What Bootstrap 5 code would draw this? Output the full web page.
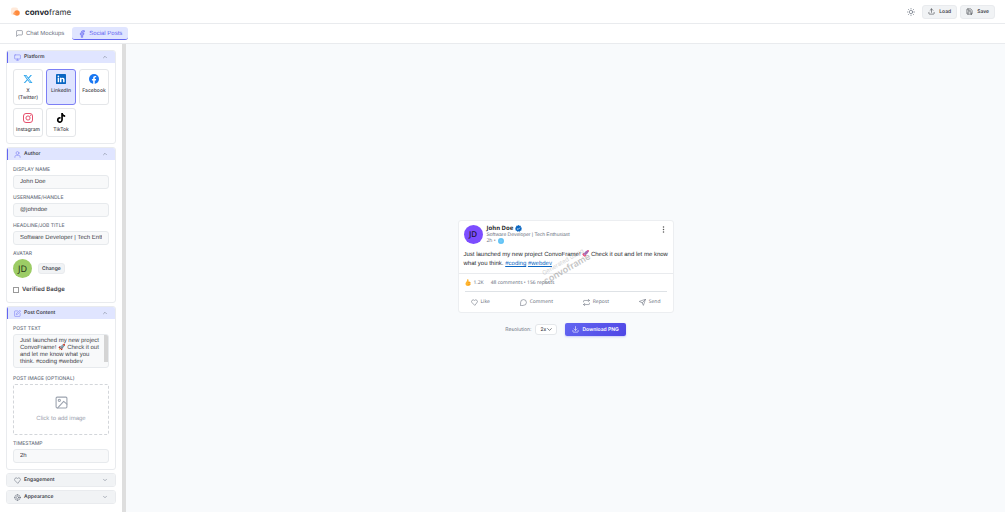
<!DOCTYPE html>
<html lang="en">
<head>
<meta charset="utf-8">
<meta name="viewport" content="width=device-width, initial-scale=1">
<title>convoframe</title>
<link href="https://cdn.jsdelivr.net/npm/bootstrap@5.3.0/dist/css/bootstrap.min.css" rel="stylesheet">
<style>
:root{--line:#e9ebee;--ink:#3f4349;--soft:#6b7280;--brand:#6366f1;--tint:#e0e5ff;--fill:#f1f3f5}
*{text-rendering:geometricPrecision}
body{font-family:Inter,"Liberation Sans",sans-serif;font-size:6px;line-height:8px;color:var(--ink);background:#fff}
svg{display:block;flex:none}
.ln{fill:none;stroke:currentColor;stroke-width:2;stroke-linecap:round;stroke-linejoin:round}
.topbar{height:24px;padding:0 10px 0 11px;border-bottom:1px solid var(--line)}
.brand{font-size:8px;line-height:12px;color:#25282d;text-decoration:none;gap:5px}
.tools{gap:3px}
.tool{height:14px;font-size:5px;line-height:8px;font-weight:600;color:var(--ink);background:var(--fill);border:1px solid #e9ebee;border-radius:3px;padding:0 5px;gap:4px}
.tabs{height:20px;padding:3px 10px;gap:2px;border-bottom:1px solid var(--line)}
.tab{height:13px;border:0;border-bottom:1px solid transparent;border-radius:3px;padding:1px 6px 0;gap:3px;font-family:"Liberation Sans",sans-serif;font-size:6px;line-height:8px;color:var(--soft);background:none}
.tab.active{color:var(--brand);background:var(--tint);border-color:var(--brand)}
.side{width:126px;flex:none;border-right:4px solid #dedede;padding:6px 6px 8px;gap:3px}
.panel{border:1px solid var(--line);border-radius:3px;overflow:hidden;background:#fff}
.head{width:100%;height:12px;border:0;padding:0 7px;gap:3px;font-size:5px;line-height:8px;font-weight:600;color:var(--ink);background:var(--fill);text-align:left}
.head svg{color:var(--soft)}
.head.open{background:var(--tint);border-left:1px solid var(--brand);padding-left:6px}
.head.open .lead-icon{color:#7c7ff5}
.inner{padding:6px}
.lbl{display:block;font-size:5px;line-height:8px;font-weight:500;color:var(--soft);margin-bottom:1px;text-transform:uppercase}
.field{margin-bottom:5px}
.box.form-control{height:14px;min-height:0;padding:0 6px;font-family:"Liberation Sans",sans-serif;font-size:6px;line-height:7px;border:1px solid #e7eaed;border-radius:3px;background:#f8f9fa;color:var(--ink)}
textarea.box.form-control{height:34px;padding:3px 8px 0 6px;overflow:hidden;resize:none;display:block;margin-bottom:7px;background:linear-gradient(#d4d4d4,#d4d4d4) right top/4px 27px no-repeat #f8f9fa}
.plats{display:grid;grid-template-columns:repeat(3,1fr);gap:3px}
.plat{border:1px solid #e4e6e9;border-radius:3px;background:#fff;padding:4px 0 2px;gap:4px;font-size:5px;line-height:7px;font-weight:500;color:var(--ink)}
.plat.active{border-color:#7c7ff5;background:var(--tint)}
.round{width:19px;height:19px;border-radius:50%;font-family:"Noto Sans",sans-serif;font-size:9px;line-height:19px;text-align:center;color:#26351a;background:#9ccc65;flex:none}
.pic{gap:6px;margin-bottom:8px}
.mini{height:11px;font-size:5px;line-height:8px;font-weight:600;background:var(--fill);border:1px solid #e9ebee;border-radius:3px;padding:0 3px;color:var(--ink)}
.verify{gap:3px;padding-bottom:2px}
.tick.form-check-input{width:6px;height:6px;margin:0;border-radius:0;border:1px solid #999;float:none}
.drop{height:51px;width:100%;border:1px dashed #d3d6da;border-radius:2px;background:#fff;color:#9ca3af;font-family:"Liberation Sans",sans-serif;font-size:6px;line-height:8px;gap:6px}
.stage{background:#f8fafc;gap:10px;padding:10px}
.post{width:100%;max-width:216px;background:#fff;border:1px solid #eceef1;border-radius:3px;font-family:"Noto Sans",sans-serif;color:#292b2e;position:relative}
.who{padding:4px 6px 0 5px;gap:4px}
.post .round{color:#1c1433;background:#7c4dff;font-weight:500;font-size:8px}
.meta{font-size:5px;line-height:6px;color:var(--soft)}
.role{font-family:"Liberation Sans",sans-serif}
.stats{height:18px;gap:3px}
.name{font-size:6px;line-height:7px;font-weight:700}
.copy{font-family:"Liberation Sans",sans-serif;font-size:6px;line-height:9px;padding:6px 2px 4px 5px;margin:0;border-bottom:1px solid var(--line)}
.copy svg{display:inline-block;vertical-align:-1px}
.copy a{color:#0a66c2}
.act{border:0;background:none;padding:0 6px;font-size:5px;line-height:8px;color:var(--soft);gap:3px}
.stamp{position:absolute;left:50%;top:50%;transform:translate(-50%,-50%) rotate(-30deg);font-family:Inter,sans-serif;color:#888;opacity:.5;font-weight:600;font-size:9px;line-height:10px;white-space:nowrap;pointer-events:none;text-align:center}
.stamp span{display:block;font-size:6px;line-height:6px;font-weight:400;opacity:.7}
.caption{font-size:5px;color:var(--soft)}
.res.form-select{width:22px;height:11px;font-size:5px;line-height:8px;padding:0 4px;border:1px solid #e4e7ea;border-radius:3px;color:var(--ink);background-size:5px;background-position:right 4px center;font-weight:500}
.dl{height:13px;font-size:5px;line-height:8px;font-weight:600;color:#fff;border:0;border-radius:2px;padding:0 7px;gap:3px;background:linear-gradient(135deg,#6366f1,#4f46e5);box-shadow:0 1px 2px #6366f14d}
</style>
</head>
<body class="d-flex flex-column min-vh-100">
<svg width="0" height="0" class="position-absolute" aria-hidden="true">
<defs>
<g id="up"><path d="m18 15-6-6-6 6"/></g>
<g id="down"><path d="m6 9 6 6 6-6"/></g>
<g id="heart"><path d="M12 21 3.500 12.500a5.500 5.500 0 0 1 8-7.800l.5.600.5-.6a5.500 5.500 0 0 1 8 7.800z"/></g>
<g id="tray"><path d="M3 15v4a2 2 0 0 0 2 2h14a2 2 0 0 0 2-2v-4"/></g>
</defs>
</svg>
<header class="topbar d-flex align-items-center justify-content-between">
<a class="brand d-flex align-items-center" href="#"><svg width="9" height="9" viewBox="0 0 18 18"><rect width="14" height="15" x="0" y="1" rx="4" fill="#ffe9d9"/><circle cx="12" cy="12" r="5.500" fill="#ff8a3d"/><circle cx="7" cy="13" r="2.500" fill="#ff9f5e"/></svg><span><b>convo</b>frame</span></a>
<div class="tools d-flex align-items-center">
<button class="btn p-0 border-0 me-1" aria-label="Theme" style="color:#6b7280"><svg class="ln" width="8" height="8" viewBox="0 0 24 24"><circle cx="12" cy="12" r="5"/><path d="M12 1v2M12 21v2M4.200 4.200l1.400 1.400M18.400 18.400l1.400 1.400M1 12h2M21 12h2M4.200 19.800l1.400-1.400M18.400 5.600l1.400-1.400"/></svg></button>
<button class="btn tool d-flex align-items-center"><svg class="ln" width="7" height="7" viewBox="0 0 24 24"><use href="#tray"/><path d="m7 8 5-5 5 5M12 3v12"/></svg>Load</button>
<button class="btn tool d-flex align-items-center"><svg class="ln" width="7" height="7" viewBox="0 0 24 24"><path d="M19 21H5a2 2 0 0 1-2-2V5a2 2 0 0 1 2-2h11l5 5v11a2 2 0 0 1-2 2z"/><path d="M17 21v-8H7v8M7 3v5h8"/></svg>Save</button>
</div>
</header>
<nav class="tabs d-flex">
<button class="tab d-flex align-items-center"><svg class="ln" width="7" height="7" viewBox="0 0 24 24"><path d="M22 15a2 2 0 0 1-2 2H7l-5 5V4a2 2 0 0 1 2-2h16a2 2 0 0 1 2 2z"/></svg>Chat Mockups</button>
<button class="tab active d-flex align-items-center"><svg class="ln" width="8" height="8" viewBox="0 0 24 24"><path fill="#b9bcfb" d="M18 2h-3a5 5 0 0 0-5 5v3H7v4h3v8h4v-8h3l1-4h-4V7a1 1 0 0 1 1-1h3z"/></svg>Social Posts</button>
</nav>
<div class="d-flex flex-grow-1">
<aside class="side d-flex flex-column">
<section class="panel">
<button class="head open d-flex align-items-center"><svg class="ln lead-icon" width="7" height="7" viewBox="0 0 24 24"><rect x="2" y="3" width="20" height="14" rx="2"/><path d="M8 21h8M12 17v4"/></svg><span class="flex-grow-1">Platform</span><svg class="ln" width="6" height="6" viewBox="0 0 24 24"><use href="#up"/></svg></button>
<div class="inner plats">
<button class="plat d-flex flex-column align-items-center"><svg width="10" height="10" viewBox="0 0 24 24"><path fill="#29a3ec" d="M18.244 2.250h3.308l-7.227 8.260 8.502 11.240H16.170l-5.214-6.817L4.990 21.750H1.680l7.730-8.835L1.254 2.250H8.080l4.713 6.231zm-1.161 17.520h1.833L7.084 4.126H5.117z"/></svg><span>X<br>(Twitter)</span></button>
<button class="plat active d-flex flex-column align-items-center"><svg width="10" height="10" viewBox="0 0 24 24"><rect width="24" height="24" rx="2" fill="#0a66c2"/><path fill="#fff" d="M4 9h3.500v11H4zM5.700 3.500a2 2 0 1 1 0 4 2 2 0 0 1 0-4zM9.500 9h3.400v1.500c.6-1 1.800-1.800 3.500-1.800 3.500 0 4.100 2.300 4.100 5.300v6H17v-5.400c0-1.300 0-2.900-1.800-2.900s-2.100 1.400-2.100 2.800V20H9.500z"/></svg><span>LinkedIn</span></button>
<button class="plat d-flex flex-column align-items-center"><svg width="10" height="10" viewBox="0 0 24 24"><circle cx="12" cy="12" r="12" fill="#1877f2"/><path fill="#fff" d="M10 24v-8.500H7V12h3V9.400C10 6.400 11.800 4.700 14.500 4.700c1.300 0 2.700.2 2.700.2v3h-1.500C14.200 7.900 13.800 8.800 13.800 9.700V12h3.300l-.5 3.500h-2.800V24z"/></svg><span>Facebook</span></button>
<button class="plat d-flex flex-column align-items-center"><svg width="10" height="10" viewBox="0 0 24 24" fill="none" stroke="#e4405f" stroke-width="2.200"><rect x="1.200" y="1.200" width="21.600" height="21.600" rx="6"/><circle cx="12" cy="12" r="5"/><circle cx="18.300" cy="5.700" r=".6"/></svg><span>Instagram</span></button>
<button class="plat d-flex flex-column align-items-center"><svg width="10" height="10" viewBox="0 0 24 24"><path d="M12.500 0h4c.2 3 2.200 5.300 5.500 5.600v4.100c-2 0-3.900-.6-5.500-1.700v8.400c0 9.200-13.400 10-14.300 1.200-.5-5 3.800-8.800 8.700-8v4.200c-2.700-.8-4.900 1-4.600 3.300.5 3.800 6.200 3.500 6.200-1z"/></svg><span>TikTok</span></button>
</div>
</section>
<section class="panel">
<button class="head open d-flex align-items-center"><svg class="ln lead-icon" width="7" height="7" viewBox="0 0 24 24"><circle cx="12" cy="7" r="5"/><path d="M3 22v-2a5 5 0 0 1 5-5h8a5 5 0 0 1 5 5v2"/></svg><span class="flex-grow-1">Author</span><svg class="ln" width="6" height="6" viewBox="0 0 24 24"><use href="#up"/></svg></button>
<div class="inner">
<div class="field"><label class="lbl" for="dn">Display Name</label><input class="form-control box" id="dn" value="John Doe"></div>
<div class="field"><label class="lbl" for="un">Username/Handle</label><input class="form-control box" id="un" value="@johndoe"></div>
<div class="field"><label class="lbl" for="hl">Headline/Job Title</label><input class="form-control box" id="hl" value="Software Developer | Tech Enthusiast"></div>
<span class="lbl">Avatar</span>
<div class="pic d-flex align-items-center"><div class="round">JD</div><button class="btn mini">Change</button></div>
<div class="verify d-flex align-items-center"><input class="form-check-input tick" type="checkbox" id="vb"><label for="vb" class="fw-semibold">Verified Badge</label></div>
</div>
</section>
<section class="panel">
<button class="head open d-flex align-items-center"><svg class="ln lead-icon" width="7" height="7" viewBox="0 0 24 24"><path d="M12 3H4a2 2 0 0 0-2 2v15a2 2 0 0 0 2 2h15a2 2 0 0 0 2-2v-8M18.500 2.500a2.100 2.100 0 0 1 3 3L12 15l-4 1 1-4z"/></svg><span class="flex-grow-1">Post Content</span><svg class="ln" width="6" height="6" viewBox="0 0 24 24"><use href="#up"/></svg></button>
<div class="inner">
<label class="lbl" for="pt">Post Text</label><textarea class="form-control box" id="pt">Just launched my new project ConvoFrame! 🚀 Check it out and let me know what you think. #coding #webdev</textarea>
<div class="field"><span class="lbl">Post Image (Optional)</span><button class="drop d-flex flex-column align-items-center justify-content-center"><svg class="ln" width="13" height="13" viewBox="0 0 24 24"><rect x="2" y="2" width="20" height="20" rx="2"/><circle cx="8" cy="8" r="2"/><path d="m22 15-6-5L5 22"/></svg>Click to add image</button></div>
<div><label class="lbl" for="ts">Timestamp</label><input class="form-control box" id="ts" value="2h"></div>
</div>
</section>
<section class="panel"><button class="head d-flex align-items-center"><svg class="ln" width="7" height="7" viewBox="0 0 24 24"><use href="#heart"/></svg><span class="flex-grow-1">Engagement</span><svg class="ln" width="6" height="6" viewBox="0 0 24 24"><use href="#down"/></svg></button></section>
<section class="panel"><button class="head d-flex align-items-center"><svg class="ln" width="7" height="7" viewBox="0 0 24 24"><circle cx="12" cy="12" r="9.500"/><circle cx="12" cy="12" r="4"/><path d="M12 1v3M12 20v3M1 12h3M20 12h3"/></svg><span class="flex-grow-1">Appearance</span><svg class="ln" width="6" height="6" viewBox="0 0 24 24"><use href="#down"/></svg></button></section>
</aside>
<main class="stage flex-grow-1 d-flex flex-column align-items-center justify-content-center">
<article class="post">
<div class="who d-flex">
<div class="round">JD</div>
<div class="flex-grow-1">
<div class="name d-flex align-items-center" style="gap:2px">John Doe <svg width="7" height="7" viewBox="0 0 24 24"><path fill="#0a66c2" d="m12 0 3.300 2.500 4.200.3.700 4.200L23.500 10 22 14l.5 4.300-4 1.400L15.500 23 12 21.500 8.500 23l-3-3.300-4-1.400L2 14 .5 10l3.300-3 .7-4.200 4.200-.3z"/><path d="m7 12 3.500 3.500L17 9" fill="none" stroke="#fff" stroke-width="2.500"/></svg></div>
<div class="meta role">Software Developer | Tech Enthusiast</div>
<div class="meta d-flex align-items-center" style="gap:2px">2h • <svg width="6" height="6" viewBox="0 0 12 12"><circle cx="6" cy="6" r="6" fill="#5dc0f5"/><path d="M6 0v12M0 6h12" stroke="#8ad5fa"/></svg></div>
</div>
<svg width="7" height="9" viewBox="0 0 14 18" fill="#555"><circle cx="7" cy="4" r="1.500"/><circle cx="7" cy="9" r="1.500"/><circle cx="7" cy="14" r="1.500"/></svg>
</div>
<p class="copy">Just launched my new project ConvoFrame! <svg width="7" height="7" viewBox="0 0 24 24" role="img" aria-label="rocket"><path fill="#e5396d" d="M7 10 3 12l-2 5 6-1zM14 17l-2 4-5 2 1-6z"/><path fill="#a56bb5" d="M6 14C9 6 15 1 23 1c0 8-5 14-13 17z"/><path fill="#e5396d" d="M17 1h6v6zM2 22l3-6 3 3z"/></svg> Check it out and let me know what you think. <a href="#">#coding</a> <a href="#">#webdev</a></p>
<div style="padding:0 6px">
<div class="stats d-flex align-items-center meta border-bottom"><svg width="6" height="7" viewBox="0 0 12 14"><path fill="#ffb52e" d="M5 0c2 0 2.500 2 2 5 3 0 4 1 4 4s-1 5-5 5-5-2-5-5c0-2 3-3 4-9z"/><path fill="#ef8c17" d="M6 7h5v1H6zM6 10h5v1H6z"/></svg><span class="me-1">1.2K</span><span>48 comments • 156 reposts</span></div>
<div class="d-flex align-items-center justify-content-between" style="height:20px">
<button class="act d-flex align-items-center"><svg class="ln" width="7" height="7" viewBox="0 0 24 24"><use href="#heart"/></svg>Like</button>
<button class="act d-flex align-items-center"><svg class="ln" width="7" height="7" viewBox="0 0 24 24"><path d="M2 22V12a10 10 0 1 1 10 10z"/></svg>Comment</button>
<button class="act d-flex align-items-center"><svg class="ln" width="7" height="7" viewBox="0 0 24 24"><path d="m18 1 4 4-4 4M2 10V7a2 2 0 0 1 2-2h18M6 23l-4-4 4-4M22 14v3a2 2 0 0 1-2 2H2"/></svg>Repost</button>
<button class="act d-flex align-items-center"><svg class="ln" width="7" height="7" viewBox="0 0 24 24"><path d="M22 2 11 13M22 2l-7 20-4-9-9-4z"/></svg>Send</button>
</div>
</div>
<div class="stamp"><span>Generated using</span>convoframe</div>
</article>
<div class="d-flex align-items-center justify-content-center">
<label for="rs" class="caption me-1">Resolution:</label>
<select id="rs" class="form-select res"><option>2x</option><option>1x</option></select>
<button class="btn dl d-flex align-items-center ms-2"><svg class="ln" width="7" height="7" viewBox="0 0 24 24"><use href="#tray"/><path d="m7 10 5 5 5-5M12 15V2"/></svg>Download PNG</button>
</div>
</main>
</div>
<script src="https://cdn.jsdelivr.net/npm/bootstrap@5.3.0/dist/js/bootstrap.bundle.min.js"></script>
</body>
</html>
